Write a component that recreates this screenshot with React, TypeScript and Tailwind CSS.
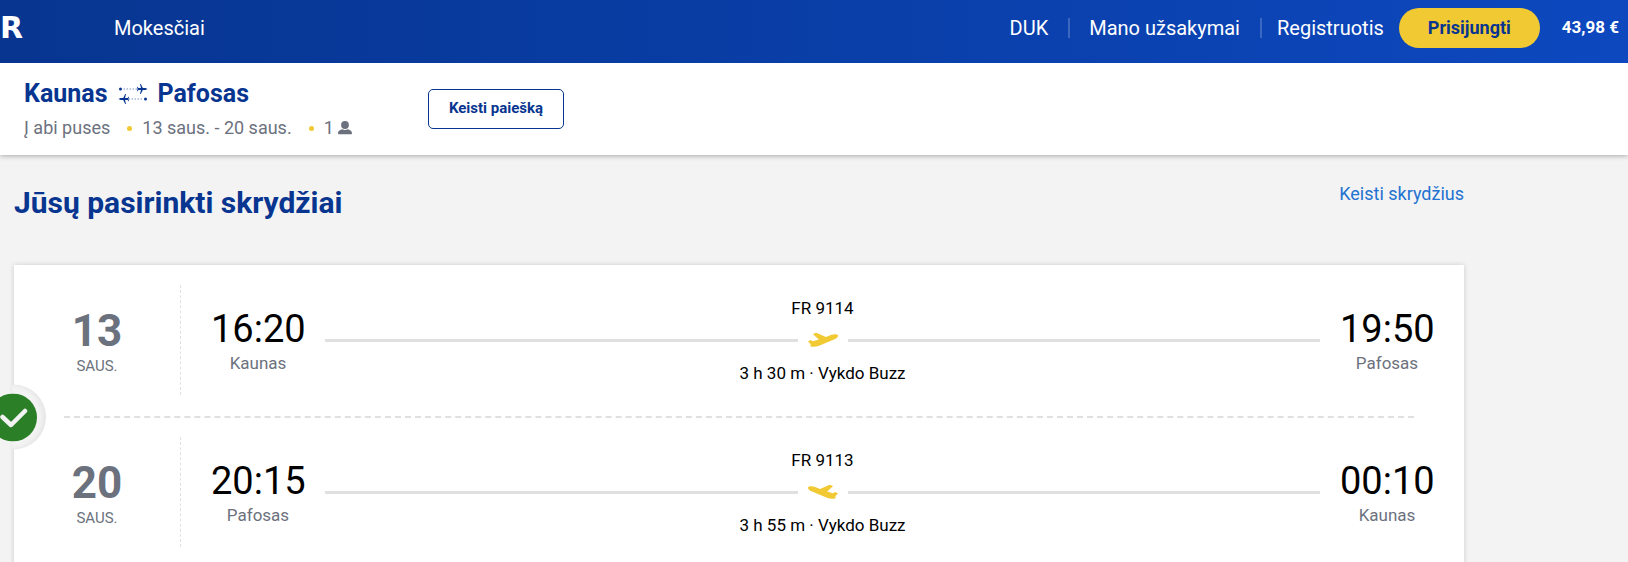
type Leg = {
  day: string;
  month: string;
  departTime: string;
  departCity: string;
  arriveTime: string;
  arriveCity: string;
  flight: string;
  duration: string;
  inbound?: boolean;
};

const legs: Leg[] = [
  {
    day: "13",
    month: "SAUS.",
    departTime: "16:20",
    departCity: "Kaunas",
    arriveTime: "19:50",
    arriveCity: "Pafosas",
    flight: "FR 9114",
    duration: "3 h 30 m · Vykdo Buzz",
  },
  {
    day: "20",
    month: "SAUS.",
    departTime: "20:15",
    departCity: "Pafosas",
    arriveTime: "00:10",
    arriveCity: "Kaunas",
    flight: "FR 9113",
    duration: "3 h 55 m · Vykdo Buzz",
    inbound: true,
  },
];

function RouteIcon() {
  return (
    <svg width="30" height="20" viewBox="0 0 30 20" fill="#073590" aria-hidden="true">
      <circle cx="2.5" cy="5" r="1.5" />
      <path d="M5.5 5h14" stroke="#073590" strokeOpacity="0.35" strokeWidth="1.5" strokeDasharray="1.5 1.5" />
      <path d="M29.5 5 27.5 5.9 24.8 6 22.8 10H22l1-4-2.6.1-.8 1.2H19L19.6 5 19 2.7h.6l.8 1.2 2.6.1L22 0h.8l2 4 2.7.1z" />
      <circle cx="27.5" cy="15" r="1.5" />
      <path d="M10.5 15h14" stroke="#073590" strokeOpacity="0.35" strokeWidth="1.5" strokeDasharray="1.5 1.5" />
      <path d="M.5 15 2.5 14.1 5.2 14 7.2 10H8l-1 4 2.6-.1.8-1.2h.6L10.4 15l.6 2.3h-.6l-.8-1.2L7 16l1 4h-.8l-2-4-2.700-.1z" />
    </svg>
  );
}

function PersonIcon() {
  return (
    <svg width="16" height="14" viewBox="0 0 16 14" fill="#6c717e" aria-hidden="true">
      <circle cx="8" cy="4" r="3.9" />
      <path d="M1 12.5C1 9.8 3.3 9 5.2 8.3c1.7 1 3.9 1 5.6 0 1.9.7 4.2 1.5 4.2 4.2 0 .6-.3.8-.8.8H1.800c-.5 0-.8-.2-.8-.8z" />
    </svg>
  );
}

function PlaneIcon({ flipped }: { flipped?: boolean }) {
  return (
    <svg className={flipped ? "-scale-x-100" : ""} width="30" height="14" viewBox="0 0 30 14" fill="#f1c933" aria-hidden="true">
      <path d="M0 8.500 2.600 7 5 8.300 10.800 6.400 5 1.200C6.500 0 8.500-.3 10 .5L18 4 23.500 1.800C26 .8 29 .9 29.900 2.200c.6 1.600-1.300 3.200-3.900 4.400L11 12.700C8 13.900 5 14.200 2.400 13.300L2.600 11z" />
    </svg>
  );
}

function Stop({ time, city }: { time: string; city: string }) {
  return (
    <div className="w-[94px] pt-0.5 text-center">
      <div className="text-[38px] leading-[44px] text-black">{time}</div>
      <div className="text-[17px] leading-6 text-[#6c717e]">{city}</div>
    </div>
  );
}

function FlightLeg({ leg }: { leg: Leg }) {
  return (
    <article className="flex h-[110px] items-center">
      <div className="flex h-full w-[167px] shrink-0 flex-col items-center justify-center border-r border-dashed border-[#e0e0e0] pt-[5px] text-[#6c717e]">
        <div className="text-[44px] leading-[46px] font-bold">{leg.day}</div>
        <div className="text-[15px] leading-6">{leg.month}</div>
      </div>
      <div className="flex flex-1 items-center gap-5 px-[30px]">
        <Stop time={leg.departTime} city={leg.departCity} />
        <div className="flex flex-1 flex-col pt-0.5 text-center text-[17px] text-black">
          <div className="leading-6">{leg.flight}</div>
          <div className="flex h-10 items-center gap-[10px]">
            <div className="h-[3px] flex-1 bg-[#e0e0e0]" />
            <PlaneIcon flipped={leg.inbound} />
            <div className="h-[3px] flex-1 bg-[#e0e0e0]" />
          </div>
          <div className="leading-[26px]">{leg.duration}</div>
        </div>
        <Stop time={leg.arriveTime} city={leg.arriveCity} />
      </div>
    </article>
  );
}

function SelectedBadge() {
  return (
    <div className="absolute top-1/2 -left-[2px] flex h-[65px] w-[34px] -translate-y-1/2 items-center rounded-r-full bg-[#f3f3f3] shadow-[inset_-3px_0_5px_rgba(0,0,0,0.06)]">
      <svg className="-ml-[23px] shrink-0" width="48" height="48" viewBox="0 0 48 48" role="img" aria-label="Pasirinkta">
        <circle cx="24" cy="24" r="24" fill="#2b8027" />
        <path d="M13.500 23.500l8.500 8L36 17.500" fill="none" stroke="#f3f3f3" strokeWidth="4.500" strokeLinecap="round" strokeLinejoin="round" />
      </svg>
    </div>
  );
}

function Dot() {
  return <span className="size-[5px] rounded-full bg-[#f1c933]" />;
}

export default function App() {
  return (
    <div className="min-h-screen overflow-x-hidden bg-[#f3f3f3] font-['Roboto',sans-serif]">
      <header className="relative z-10 flex h-[63px] items-center bg-linear-to-r from-[#073590] to-[#0d48bf] pr-[9px] pb-[7px] text-white">
        <a href="#" className="w-[114px] font-['DejaVu_Sans',sans-serif] text-[30px] leading-none font-bold">
          R
        </a>
        <a href="#" className="text-xl">
          Mokesčiai
        </a>
        <nav className="ml-auto flex items-center text-xl">
          <a href="#" className="pr-5">
            DUK
          </a>
          <a href="#" className="border-l-2 border-white/20 pr-5 pl-[19px] leading-5">
            Mano užsakymai
          </a>
          <a href="#" className="border-l-2 border-white/20 px-[15px] leading-5">
            Registruotis
          </a>
          <button type="button" className="h-10 w-[141px] rounded-full bg-[#f1c933] text-lg font-bold text-[#073590]">
            Prisijungti
          </button>
          <span className="pl-[22px] text-[17px] font-bold">43,98 €</span>
        </nav>
      </header>

      <section className="relative flex h-[92px] items-center bg-white pl-6 shadow-[0_1px_5px_rgba(0,0,0,0.3)]">
        <div className="w-[404px] pt-1.5">
          <h2 className="flex items-center gap-[10px] text-[25px] leading-8 font-bold text-[#073590]">
            Kaunas
            <RouteIcon />
            Pafosas
          </h2>
          <div className="flex items-center text-lg leading-9 text-[#6c717e]">
            <span className="mr-[17px]">Į abi puses</span>
            <Dot />
            <span className="mr-[17px] ml-[10px]">13 saus. - 20 saus.</span>
            <Dot />
            <span className="mr-[3px] ml-[10px]">1</span>
            <PersonIcon />
          </div>
        </div>
        <button type="button" className="h-10 w-[136px] rounded-[5px] border border-[#073590] bg-white pb-0.5 text-[15px] font-bold text-[#073590]">
          Keisti paiešką
        </button>
      </section>

      <main className="mr-[164px] ml-[14px] pt-7">
        <div className="flex items-start justify-between pb-[42px]">
          <h1 className="text-[30px] leading-10 font-bold text-[#073590]">Jūsų pasirinkti skrydžiai</h1>
          <a href="#" className="text-lg leading-[22px] text-[#2272d1]">
            Keisti skrydžius
          </a>
        </div>
        <section className="relative bg-white pt-5 pb-[22px] shadow-[0_0_5px_rgba(0,0,0,0.16)]">
          <FlightLeg leg={legs[0]} />
          <div className="mx-[50px] mt-[21px] mb-[19px] border-t-2 border-dashed border-[#e0e0e0]" />
          <FlightLeg leg={legs[1]} />
          <SelectedBadge />
        </section>
      </main>
    </div>
  );
}
